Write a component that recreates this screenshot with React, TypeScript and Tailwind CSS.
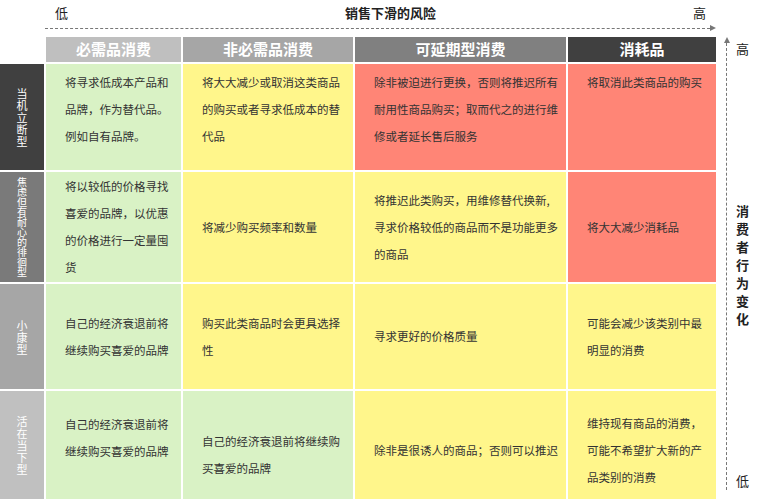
const G = "bg-[#d9f2c5]", Y = "bg-[#fff68b]", R = "bg-[#ff8576]";
type C = { bg: string; lines: string[]; align?: string };
const rows: { label: string; lbg: string; h: string; cells: C[] }[] = [
  { label: "当机立断型", lbg: "bg-[#404040]", h: "h-[106px]", cells: [
    { bg: G, lines: ["将寻求低成本产品和", "品牌，作为替代品。", "例如自有品牌。"], align: "justify-start pt-[5px]" },
    { bg: Y, lines: ["将大大减少或取消这类商品", "的购买或者寻求低成本的替", "代品"], align: "justify-start pt-[5px]" },
    { bg: R, lines: ["除非被迫进行更换，否则将推迟所有", "耐用性商品购买；取而代之的进行维", "修或者延长售后服务"], align: "justify-start pt-[5px]" },
    { bg: R, lines: ["将取消此类商品的购买"], align: "justify-start pt-[5px]" },
  ]},
  { label: "焦虑但有耐心的徘徊型", lbg: "bg-[#7a7a7a]", h: "h-[110px]", cells: [
    { bg: G, lines: ["将以较低的价格寻找", "喜爱的品牌，以优惠", "的价格进行一定量囤", "货"] },
    { bg: Y, lines: ["将减少购买频率和数量"] },
    { bg: Y, lines: ["将推迟此类购买，用维修替代换新,", "寻求价格较低的商品而不是功能更多", "的商品"] },
    { bg: R, lines: ["将大大减少消耗品"] },
  ]},
  { label: "小康型", lbg: "bg-[#a6a6a6]", h: "h-[105px]", cells: [
    { bg: G, lines: ["自己的经济衰退前将", "继续购买喜爱的品牌"] },
    { bg: Y, lines: ["购买此类商品时会更具选择", "性"] },
    { bg: Y, lines: ["寻求更好的价格质量"] },
    { bg: Y, lines: ["可能会减少该类别中最", "明显的消费"] },
  ]},
  { label: "活在当下型", lbg: "bg-[#c0c0c0]", h: "h-[108px]", cells: [
    { bg: G, lines: ["自己的经济衰退前将", "继续购买喜爱的品牌"], align: "justify-start pt-[20px]" },
    { bg: G, lines: ["自己的经济衰退前将继续购", "买喜爱的品牌"], align: "justify-center pt-[20px]" },
    { bg: Y, lines: ["除非是很诱人的商品；否则可以推迟"], align: "justify-center pt-[10px]" },
    { bg: Y, lines: ["维持现有商品的消费，", "可能不希望扩大新的产", "品类别的消费"], align: "justify-center pt-[10px]" },
  ]},
];
const heads = [["必需品消费", "bg-[#bfbfbf]"], ["非必需品消费", "bg-[#a6a6a6]"], ["可延期型消费", "bg-[#808080]"], ["消耗品", "bg-[#404040]"]];
const f = { fontFamily: '"Noto Sans CJK SC", sans-serif' };
export default function App() {
  return (
    <div className="w-[765px] h-[500px] bg-white flex text-[#222]" style={f}>
      <div className="w-[716px] flex flex-col">
        <div className="h-[37px] pl-[45px] flex flex-col">
          <div className="flex items-center justify-between h-[25px] px-[10px] text-[13px]">
            <span>低</span>
            <span className="font-bold pl-[20px]">销售下滑的风险</span>
            <span>高</span>
          </div>
          <div className="flex items-center">
            <div className="flex-1 border-t border-dashed border-[#777]" />
            <div className="w-0 h-0 border-y-[3px] border-y-transparent border-l-[6px] border-l-[#777]" />
          </div>
        </div>
        <div className="grid grid-cols-[44px_135px_170px_211px_148px] gap-[2px]">
          <div className="h-[25px]" />
          {heads.map(([t, b]) => <div key={t} className={`${b} h-[25px] text-white font-bold text-[15px] flex items-center justify-center`}>{t}</div>)}
          {rows.map(r => [
            <div key={r.label} className={`${r.lbg} ${r.h} flex items-center justify-center overflow-hidden`}>
              <div className={`flex flex-col items-center text-white ${r.label.length > 6 ? "text-[10px] leading-[10px]" : "text-[11px] leading-[12px]"}`}>{[...r.label].map((c, i) => <span key={i}>{c}</span>)}</div>
            </div>,
            ...r.cells.map((c, i) => (
              <div key={r.label + i} className={`${c.bg} ${r.h} flex flex-col ${c.align ?? "justify-center"} pl-[19px] text-[11.5px] leading-[27px] text-[#333]`}>
                {c.lines.map((l, j) => <div key={j} className="whitespace-nowrap">{l}</div>)}
              </div>
            )),
          ])}
        </div>
      </div>
      <div className="flex-1 flex pt-[37px] pb-[10px]">
        <div className="w-[20px] flex flex-col items-center pl-[1px]">
          <div className="w-0 h-0 border-x-[3px] border-x-transparent border-b-[6px] border-b-[#777]" />
          <div className="flex-1 border-l border-dashed border-[#777]" />
        </div>
        <div className="flex flex-col items-center justify-between text-[13px] pt-[2px] pb-0">
          <span>高</span>
          <div className="flex flex-col items-center font-bold leading-[18px]">{[..."消费者行为变化"].map((c, i) => <span key={i}>{c}</span>)}</div>
          <span>低</span>
        </div>
      </div>
    </div>
  );
}
